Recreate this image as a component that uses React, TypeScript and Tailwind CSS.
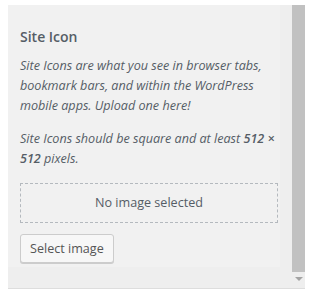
import React from "react";

export default function App() {
  return (
    <div className="w-[313px] h-[298px] bg-white pt-[5px] pl-[8px]" style={{ fontFamily: '"Open Sans", "Noto Sans", sans-serif' }}>
      <div className="w-[297px] h-[284px] bg-[#eeeeee] border-b border-[#dddddd] flex">
        <div className="w-[284px] flex">
          <div className="w-[272px] h-[262px] bg-[#f1f1f1] pl-[12px] pr-[2px] pt-[22px]">
            <div className="text-[14px] font-semibold text-[#555d66] leading-[20px]">Site Icon</div>
            <p className="mt-[9px] text-[12.6px] italic text-[#555d66] leading-[20px]">
              Site Icons are what you see in browser tabs, bookmark bars, and within the WordPress mobile apps. Upload one here!
            </p>
            <p className="mt-[13px] text-[12.6px] italic text-[#555d66] leading-[20px]">
              Site Icons should be square and at least <strong className="font-semibold">512 × 512</strong> pixels.
            </p>
            <div className="mt-[14px] w-[258px] h-[40px] border border-dashed border-[#b4b9be] flex items-center justify-center text-[12.6px] text-[#555d66]">
              No image selected
            </div>
            <button className="mt-[11px] h-[29px] px-[9px] bg-[#f7f7f7] border border-[#cccccc] rounded-[3px] shadow-[0_1px_0_#cccccc] text-[12.6px] text-[#555555] leading-[26px]">
              Select image
            </button>
          </div>
        </div>
        <div className="w-[13px] flex flex-col items-center">
          <div className="w-[13px] h-[267px] bg-[#c1c1c1]"></div>
          <div className="mt-[5px] w-0 h-0 border-l-[4px] border-r-[4px] border-t-[4px] border-l-transparent border-r-transparent border-t-[#a3a3a3]"></div>
        </div>
      </div>
    </div>
  );
}
